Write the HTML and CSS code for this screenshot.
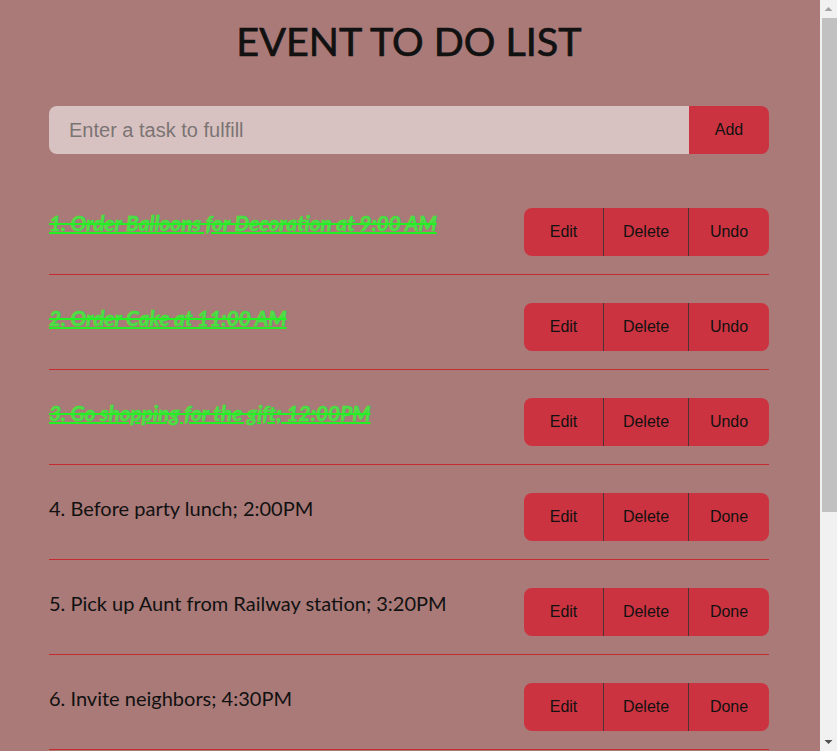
FILE: index.html
```html
<!DOCTYPE html>
<html lang="en">
<head>
<meta charset="utf-8">
<title>Event To Do List</title>
<link rel="stylesheet" href="styles.css">
</head>
<body>
<div class="container">
  <h1 class="title">EVENT TO DO LIST</h1>
  <form class="task-form">
    <input class="task-input" type="text" placeholder="Enter a task to fulfill">
    <button class="add-btn" type="button">Add</button>
  </form>
  <ul class="task-list">
    <li class="task">
      <span class="task-text done">1. Order Balloons for Decoration at 9:00 AM</span>
      <div class="actions"><button class="btn edit">Edit</button><button class="btn delete">Delete</button><button class="btn toggle">Undo</button></div>
    </li>
    <li class="task">
      <span class="task-text done">2. Order Cake at 11:00 AM</span>
      <div class="actions"><button class="btn edit">Edit</button><button class="btn delete">Delete</button><button class="btn toggle">Undo</button></div>
    </li>
    <li class="task">
      <span class="task-text done">3. Go shopping for the gift; 12:00PM</span>
      <div class="actions"><button class="btn edit">Edit</button><button class="btn delete">Delete</button><button class="btn toggle">Undo</button></div>
    </li>
    <li class="task">
      <span class="task-text">4. Before party lunch; 2:00PM</span>
      <div class="actions"><button class="btn edit">Edit</button><button class="btn delete">Delete</button><button class="btn toggle">Done</button></div>
    </li>
    <li class="task">
      <span class="task-text">5. Pick up Aunt from Railway station; 3:20PM</span>
      <div class="actions"><button class="btn edit">Edit</button><button class="btn delete">Delete</button><button class="btn toggle">Done</button></div>
    </li>
    <li class="task">
      <span class="task-text">6. Invite neighbors; 4:30PM</span>
      <div class="actions"><button class="btn edit">Edit</button><button class="btn delete">Delete</button><button class="btn toggle">Done</button></div>
    </li>
    <li class="task">
      <span class="task-text">7. Decorate the hall; 5:00PM</span>
      <div class="actions"><button class="btn edit">Edit</button><button class="btn delete">Delete</button><button class="btn toggle">Done</button></div>
    </li>
    <li class="task">
      <span class="task-text">8. Welcome the guests; 6:00PM</span>
      <div class="actions"><button class="btn edit">Edit</button><button class="btn delete">Delete</button><button class="btn toggle">Done</button></div>
    </li>
    <li class="task">
      <span class="task-text">9. Cut the cake; 7:00PM</span>
      <div class="actions"><button class="btn edit">Edit</button><button class="btn delete">Delete</button><button class="btn toggle">Done</button></div>
    </li>
  </ul>
</div>
<div class="scrollbar" aria-hidden="true">
  <svg class="sb-arrow" width="17" height="17" viewBox="0 0 17 17"><path d="M4.5 11 L8.5 7 L12.5 11 Z" fill="#a3a3a3"/></svg>
  <div class="sb-track"><div class="sb-thumb"></div></div>
  <svg class="sb-arrow" width="17" height="17" viewBox="0 0 17 17"><path d="M4.5 6 L8.5 10 L12.5 6 Z" fill="#505050"/></svg>
</div>
</body>
</html>
```
FILE: styles.css
```css
html, body {
  margin: 0;
  padding: 0;
  background: #a97a78;
}

body {
  font-family: Lato, "Liberation Sans", sans-serif;
  color: #111;
  padding-right: 19px;
}

.container {
  width: 720px;
  margin: 0 auto;
  padding: 17px 0 55px;
}

.title {
  margin: 0 0 41px;
  font-family: Lato, sans-serif;
  font-size: 39.5px;
  font-weight: 400;
  line-height: 48px;
  text-align: center;
  color: #111;
  -webkit-text-stroke: 0.7px #111;
}

.task-form {
  display: flex;
  height: 48px;
  margin: 0;
}

.task-input {
  flex: 1;
  min-width: 0;
  border: none;
  outline: none;
  background: #d8c2c1;
  border-radius: 8px 0 0 8px;
  padding: 0 20px;
  font-family: "Liberation Sans", Arial, sans-serif;
  font-size: 20px;
  color: #222;
}

.task-input::placeholder {
  color: #7b7474;
}

.add-btn {
  width: 80px;
  border: none;
  background: #cc3340;
  border-radius: 0 8px 8px 0;
  font-family: "Liberation Sans", Arial, sans-serif;
  font-size: 16px;
  color: #111;
  padding: 0;
}

.task-list {
  list-style: none;
  margin: 26px 0 0;
  padding: 0;
}

.task {
  display: flex;
  justify-content: space-between;
  align-items: flex-start;
  padding: 28px 0 18px;
  border-bottom: 1px solid #c42a2e;
}

.task-text {
  font-size: 20px;
  line-height: 30px;
  color: #111;
}

.task-text.done {
  font-style: italic;
  font-weight: 700;
  font-size: 20.8px;
  color: rgba(70, 235, 70, 0.85);
  -webkit-text-stroke: 0.5px #22f022;
  text-decoration: underline line-through;
  text-decoration-color: #22f022;
  text-decoration-thickness: 2px;
}

.actions {
  display: flex;
  height: 48px;
  border-radius: 8px;
  overflow: hidden;
  flex-shrink: 0;
}

.btn {
  border: none;
  background: #cc3340;
  font-family: "Liberation Sans", Arial, sans-serif;
  font-size: 16px;
  color: #111;
  padding: 0;
  height: 48px;
}

.btn.edit {
  width: 79px;
}

.btn.delete {
  width: 85px;
  border-left: 1px solid #4a3236;
}

.btn.toggle {
  width: 81px;
  border-left: 1px solid #4a3236;
}

.scrollbar {
  position: fixed;
  top: 0;
  right: 0;
  width: 17px;
  height: 100vh;
  background: #f1f1f1;
  display: flex;
  flex-direction: column;
}

.sb-arrow {
  display: block;
  flex-shrink: 0;
}

.sb-track {
  flex: 1;
  padding: 1px 0 0 2px;
}

.sb-thumb {
  height: 494px;
  background: #c1c1c1;
}
```
